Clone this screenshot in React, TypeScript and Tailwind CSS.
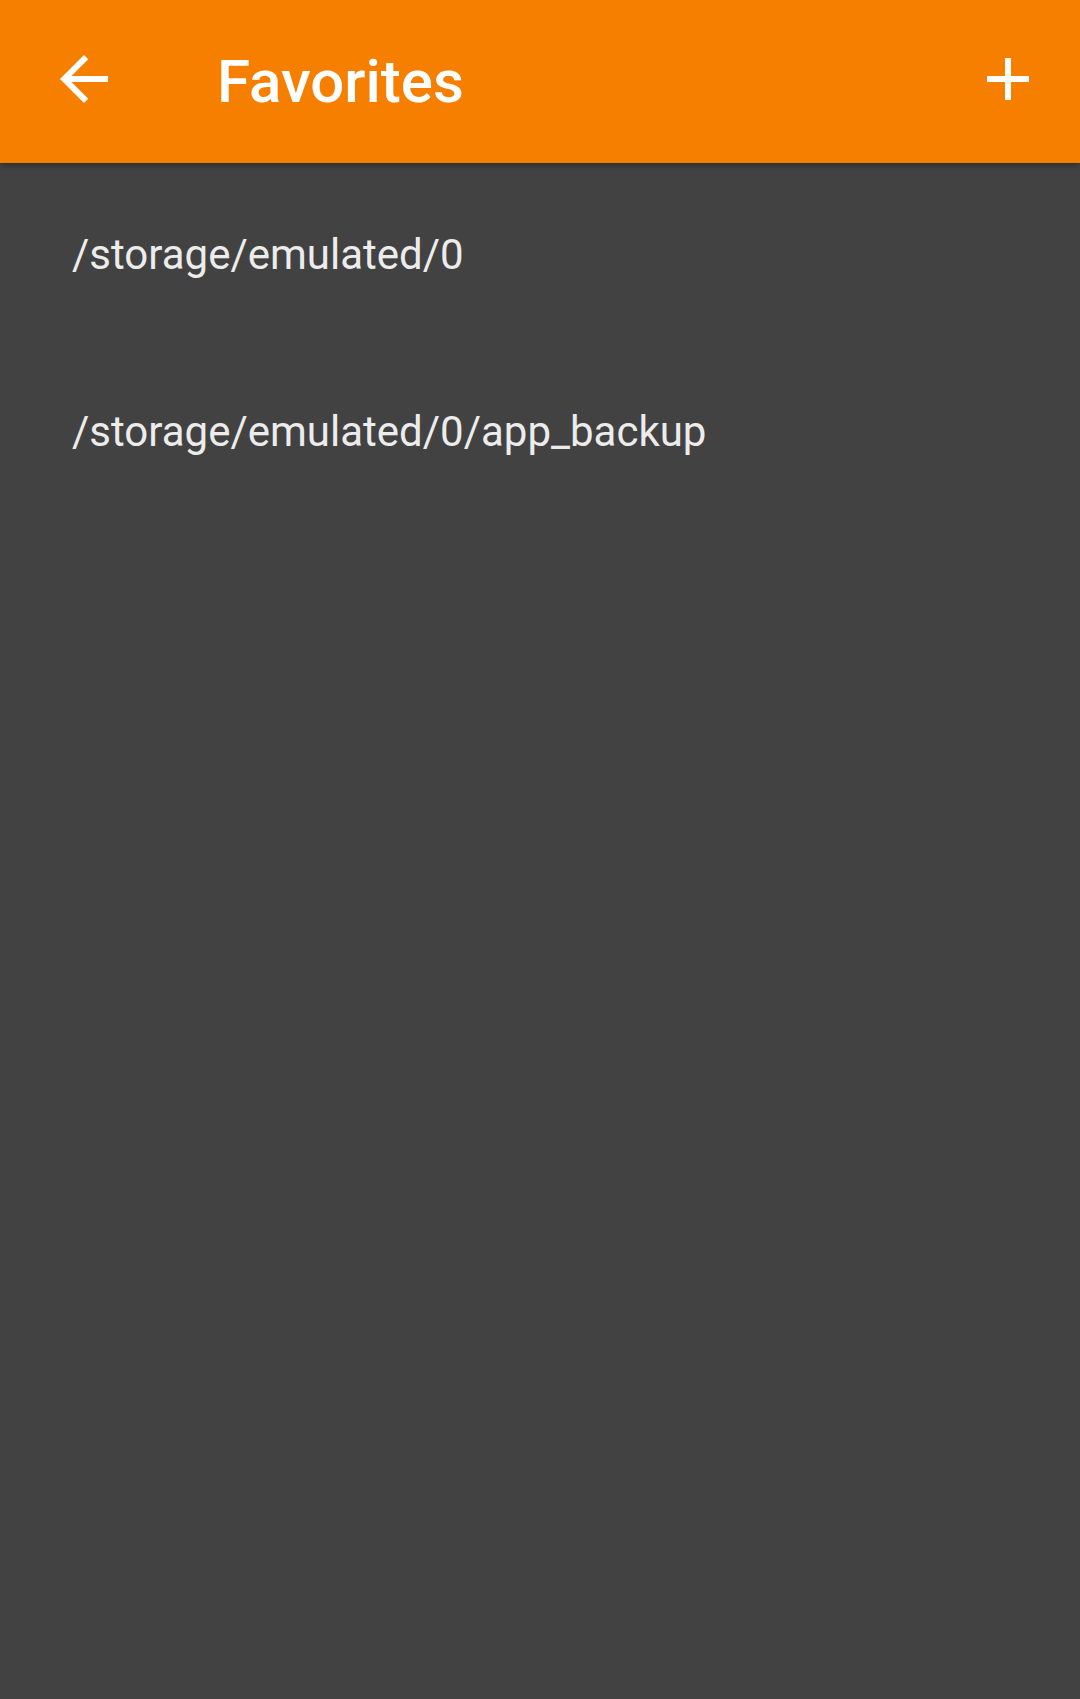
const favorites = ['/storage/emulated/0', '/storage/emulated/0/app_backup'];

export default function App() {
  return (
    <div
      className="w-[1080px] h-[1699px] bg-[#424242] flex flex-col overflow-hidden"
      style={{ fontFamily: 'Roboto, "Noto Sans", sans-serif' }}
    >
      {/* Toolbar */}
      <div className="relative z-10 h-[163px] shrink-0 bg-[#f77f00] flex items-center shadow-[0_2px_6px_rgba(0,0,0,0.35)]">
        <button className="ml-[48px] mb-[5px] w-[72px] h-[72px] flex items-center justify-center text-white" aria-label="Back">
          <svg viewBox="0 0 24 24" className="w-[72px] h-[72px]" fill="currentColor">
            <path d="M20 11H7.83l5.59-5.59L12 4l-8 8 8 8 1.41-1.41L7.83 13H20v-2z" />
          </svg>
        </button>
        <h1 className="ml-[97px] text-white text-[60px] font-medium leading-none">Favorites</h1>
        <button className="ml-auto mr-[36px] mb-[5px] w-[72px] h-[72px] flex items-center justify-center text-white" aria-label="Add">
          <svg viewBox="0 0 24 24" className="w-[72px] h-[72px]" fill="currentColor">
            <path d="M19 13h-6v6h-2v-6H5v-2h6V5h2v6h6v2z" />
          </svg>
        </button>
      </div>

      {/* Favorites list */}
      <div className="flex flex-col pt-[3px]">
        {favorites.map((path) => (
          <div key={path} className="h-[177px] flex items-center pl-[72px]">
            <span className="text-[#ececec] text-[42px] leading-[50px]">{path}</span>
          </div>
        ))}
      </div>
    </div>
  );
}
